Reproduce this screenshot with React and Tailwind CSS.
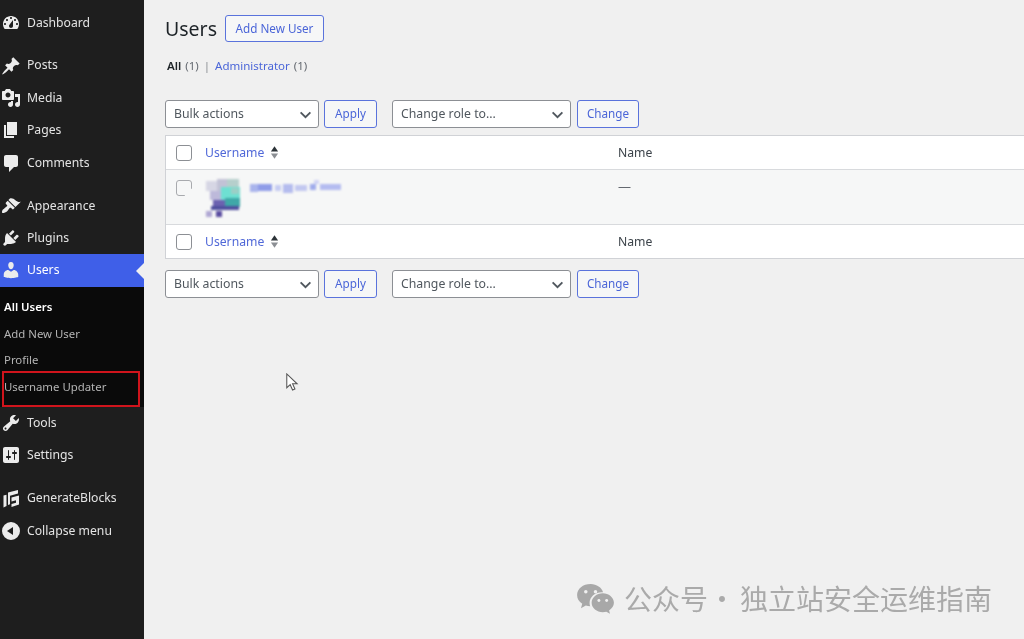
const icons = {
  dashboard: 'M3.76 16h12.48c1.1-1.37 1.76-3.11 1.76-5 0-4.42-3.58-8-8-8s-8 3.58-8 8c0 1.89.66 3.63 1.76 5zM10 4c.55 0 1 .45 1 1s-.45 1-1 1-1-.45-1-1 .45-1 1-1zM6 6c.55 0 1 .45 1 1s-.45 1-1 1-1-.45-1-1 .45-1 1-1zm8 0c.55 0 1 .45 1 1s-.45 1-1 1-1-.45-1-1 .45-1 1-1zm-5.37 5.55L12 7v6c0 1.1-.9 2-2 2s-2-.9-2-2c0-.57.24-1.08.63-1.45zM4 10c.55 0 1 .45 1 1s-.45 1-1 1-1-.45-1-1 .45-1 1-1zm12 0c.55 0 1 .45 1 1s-.45 1-1 1-1-.45-1-1 .45-1 1-1z',
  posts: 'M10.44 3.02l1.82-1.82 6.36 6.35-1.83 1.82c-1.05-.68-2.48-.57-3.41.36l-.75.75c-.92.93-1.04 2.35-.35 3.41l-1.83 1.82-2.41-2.41-2.8 2.79c-.42.42-3.38 2.71-3.8 2.29s1.86-3.39 2.28-3.81l2.79-2.79L4.1 9.36l1.83-1.82c1.05.69 2.48.57 3.4-.36l.75-.75c.93-.92 1.05-2.35.36-3.41z',
  media: 'M13 11V4c0-.55-.45-1-1-1h-1.67L9 1H5L3.67 3H2c-.55 0-1 .45-1 1v7c0 .55.45 1 1 1h10c.55 0 1-.45 1-1zM7 4.5c1.38 0 2.5 1.12 2.5 2.5S8.38 9.5 7 9.5 4.5 8.38 4.5 7 5.62 4.5 7 4.5zM14 6h5v10.5c0 1.38-1.12 2.5-2.5 2.5S14 17.88 14 16.5s1.12-2.5 2.5-2.5c.17 0 .34.02.5.05V9h-3V6zm-4 8.05V13h2v3.5c0 1.38-1.12 2.5-2.5 2.5S7 17.88 7 16.5 8.12 14 9.5 14c.17 0 .34.02.5.05z',
  pages: 'M6 15V2h10v13H6zm-1 1h8v2H3V5h2v11z',
  comments: 'M5 2h10c1.1 0 2 .9 2 2v8c0 1.1-.9 2-2 2h-2l-5 5v-5H5c-1.1 0-2-.9-2-2V4c0-1.1.9-2 2-2z',
  appearance: 'M14.48 11.06L7.41 3.99l1.5-1.5c.5-.56 2.3-.47 3.51.32 1.21.8 1.43 1.28 2.91 2.1 1.18.64 2.45 1.26 4.45.85zm-.71.71L6.7 4.7 4.93 6.47c-.39.39-.39 1.02 0 1.41l1.06 1.06c.39.39.39 1.03 0 1.42-.6.6-1.43 1.11-2.21 1.69-.35.26-.7.53-1.01.84C1.43 13.23.78 15.6 1 16.5c.09.28.26.46.53.53.91.21 3.27-.42 4.63-1.77.31-.31.58-.66.84-1.01.58-.78 1.09-1.61 1.69-2.21.39-.39 1.03-.39 1.42 0l1.06 1.06c.39.39 1.02.39 1.41 0z',
  plugins: 'M13.11 4.36L9.87 7.6 8 5.73l3.24-3.24c.35-.34 1.05-.2 1.56.32.52.51.66 1.21.31 1.55zm-8 1.77l.91-1.12 9.01 9.01-1.19.84c-.71.71-2.63 1.16-3.82 1.16H6.14L4.9 17.26c-.59.59-1.54.59-2.12 0-.59-.58-.59-1.53 0-2.12l1.24-1.24v-3.88c0-1.13.4-3.19 1.09-3.89zm7.26 3.97l3.24-3.24c.34-.35 1.04-.21 1.55.31.52.51.66 1.21.31 1.55l-3.24 3.25z',
  users: 'M10 9.25c-2.27 0-2.73-3.44-2.73-3.44C7 4.02 7.82 2 9.97 2c2.16 0 2.98 2.02 2.71 3.81 0 0-.41 3.44-2.68 3.44zm0 2.57L12.72 10c2.39 0 4.52 2.33 4.52 4.53v2.49s-3.65 1.13-7.24 1.13c-3.65 0-7.24-1.13-7.24-1.13v-2.49c0-2.25 1.94-4.48 4.47-4.48z',
  tools: 'M16.68 9.77c-1.34 1.34-3.3 1.67-4.95.99l-5.41 6.52c-.99.99-2.59.99-3.58 0s-.99-2.59 0-3.57l6.52-5.42c-.68-1.65-.35-3.61.99-4.95 1.28-1.28 3.12-1.62 4.72-1.06l-2.89 2.89 2.82 2.82 2.86-2.87c.53 1.58.18 3.39-1.08 4.65zM3.81 16.21c.4.39 1.04.39 1.43 0 .4-.4.4-1.04 0-1.43-.39-.4-1.03-.4-1.43 0-.39.39-.39 1.03 0 1.43z',
  settings: 'M18 16V4c0-1.1-.9-2-2-2H4c-1.1 0-2 .9-2 2v12c0 1.1.9 2 2 2h12c1.1 0 2-.9 2-2zM8 11h1c.55 0 1 .45 1 1s-.45 1-1 1H8v1.5c0 .28-.22.5-.5.5s-.5-.22-.5-.5V13H6c-.55 0-1-.45-1-1s.45-1 1-1h1V5.5c0-.28.22-.5.5-.5s.5.22.5.5V11zm5-2h-1c-.55 0-1-.45-1-1s.45-1 1-1h1V5.5c0-.28.22-.5.5-.5s.5.22.5.5V7h1c.55 0 1 .45 1 1s-.45 1-1 1h-1v5.5c0 .28-.22.5-.5.5s-.5-.22-.5-.5V9z',
  blocks: 'M7 3.500l10-2.500v3.500L9 6.700v8.500L7 16zM2.500 6.500l3-.8V17l-3 1.500zM10.500 8.500L18 6.500v9l-7.500 2.500v-3l4.500-1.300v-2.500l-4.500 1.300z',
  collapse: 'M10 1a9 9 0 1 0 0 18a9 9 0 0 0 0-18zM12 6v8l-6-4z',
}

function MenuIcon({name}){
  return (
    <svg viewBox="0 0 20 20" className="w-[20px] h-[20px] shrink-0 fill-[#ececec]" fillRule="evenodd">
      <path d={icons[name]} />
    </svg>
  )
}

function MenuItem({icon,label,active}){
  return (
    <div className={`relative flex items-center h-[32.4px] pl-[1px] gap-[6px] text-[12.2px] ${active ? 'bg-[#3f5fe8] text-white' : 'text-[#e4e4e4]'}`}>
      <MenuIcon name={icon} />
      <span>{label}</span>
      {active && <span className="absolute right-0 top-[9px] w-0 h-0 border-y-[8px] border-y-transparent border-r-[8px] border-r-[#f0f0f0]"></span>}
    </div>
  )
}

function SubItem({label,current}){
  return (
    <div className={`h-[26.5px] flex items-center pl-[4px] text-[11.4px] ${current ? 'font-semibold text-white' : 'text-[#b4b4b4]'}`}>
      {label}
    </div>
  )
}

function SelectBox({label,width}){
  return (
    <div className={`${width} h-[28px] flex items-center justify-between pl-[8px] pr-[6px] bg-white border border-[#8c8f94] rounded-[3px] text-[12.300px] text-[#50575e]`}>
      <span>{label}</span>
      <svg viewBox="0 0 12 12" className="w-[13px] h-[13px] fill-none stroke-[#50575e] stroke-[1.7]">
        <path d="M1.5 4l4.5 4.5L10.5 4" />
      </svg>
    </div>
  )
}

function OutlineButton({label,width}){
  return (
    <div className={`${width} h-[28px] flex items-center justify-center bg-[#f6f7f7] border border-[#5a73dc] rounded-[3px] text-[11.700px] text-[#4a65d8]`}>
      {label}
    </div>
  )
}

function TableNav({className}){
  return (
    <div className={`flex items-center ${className}`}>
      <SelectBox label="Bulk actions" width="w-[154px]" />
      <div className="w-[5px]"></div>
      <OutlineButton label="Apply" width="w-[53px]" />
      <div className="w-[15px]"></div>
      <SelectBox label="Change role to..." width="w-[179px]" />
      <div className="w-[6px]"></div>
      <OutlineButton label="Change" width="w-[62px]" />
    </div>
  )
}

function CheckBox(){
  return <span className="block w-[16px] h-[16px] bg-white border border-[#8c8f94] rounded-[3px] shrink-0"></span>
}

function HeadRow({borderClass}){
  return (
    <div className={`flex items-center h-[34px] bg-white text-[12.200px] ${borderClass}`}>
      <div className="w-[39px] pl-[10px]"><CheckBox /></div>
      <div className="w-[413px] flex items-center gap-[6px] text-[#5068d8]">
        <span className="pt-[2px]">Username</span>
        <svg viewBox="0 0 10 16" className="w-[9px] h-[15px]">
          <path d="M5 1l4 6H1z" fill="#2c3338" />
          <path d="M5 15l4-6H1z" fill="#8c8f94" />
        </svg>
      </div>
      <div className="pt-[2px] text-[#3c434a]">Name</div>
    </div>
  )
}

// pixelated placeholder of the blurred out avatar and login
function BlurredUser(){
  return (
    <svg viewBox="0 0 140 42" className="w-[140px] h-[42px] blur-[0.8px]">
      <g>
        <rect x="1" y="2" width="11" height="10" fill="#d6d6e4" />
        <rect x="12" y="0" width="10" height="12" fill="#c2c2d6" />
        <rect x="22" y="0" width="12" height="10" fill="#b6cfcc" />
        <rect x="5" y="12" width="11" height="9" fill="#bdb9da" />
        <rect x="16" y="8" width="19" height="13" fill="#6ee0d2" />
        <rect x="26" y="9" width="8" height="6" fill="#9ccfc6" />
        <rect x="8" y="21" width="12" height="8" fill="#6b62b0" />
        <rect x="20" y="19" width="15" height="9" fill="#3fa8a8" />
        <rect x="6" y="27" width="28" height="4" fill="#4f4f9e" />
        <rect x="1" y="32" width="6" height="6" fill="#b0a8d4" />
        <rect x="11" y="32" width="6" height="6" fill="#5a4ca0" />
        <rect x="45" y="5" width="8" height="8" fill="#a9b4ec" />
        <rect x="53" y="5" width="14" height="7" fill="#8f9ce8" />
        <rect x="70" y="6" width="6" height="6" fill="#c6ccf2" />
        <rect x="78" y="5" width="10" height="9" fill="#b4bcee" />
        <rect x="90" y="6" width="12" height="6" fill="#c2c8f0" />
        <rect x="105" y="5" width="6" height="6" fill="#a0acec" />
        <rect x="109" y="1" width="5" height="4" fill="#d0d4f4" />
        <rect x="115" y="5" width="21" height="6" fill="#b4bcf0" />
      </g>
    </svg>
  )
}

export default function App(){
  return (
    <div className="relative flex h-[639px] w-[1024px] overflow-hidden bg-[#f0f0f0] blur-[0.35px] font-['Noto_Sans','Liberation_Sans',sans-serif]">
      {/* Sidebar */}
      <aside className="w-[144px] shrink-0 bg-[#1e1e1e] pt-[6.5px]">
        <MenuItem icon="dashboard" label="Dashboard" />
        <div className="h-[10.5px]"></div>
        <MenuItem icon="posts" label="Posts" />
        <MenuItem icon="media" label="Media" />
        <MenuItem icon="pages" label="Pages" />
        <MenuItem icon="comments" label="Comments" />
        <div className="h-[10.5px]"></div>
        <MenuItem icon="appearance" label="Appearance" />
        <MenuItem icon="plugins" label="Plugins" />
        <MenuItem icon="users" label="Users" active />
        <div className="bg-[#0a0a0a] pt-[7px] pb-[7px]">
          <SubItem label="All Users" current />
          <SubItem label="Add New User" />
          <SubItem label="Profile" />
          <SubItem label="Username Updater" />
        </div>
        <MenuItem icon="tools" label="Tools" />
        <MenuItem icon="settings" label="Settings" />
        <div className="h-[11px]"></div>
        <MenuItem icon="blocks" label="GenerateBlocks" />
        <MenuItem icon="collapse" label="Collapse menu" />
      </aside>

      {/* Main content */}
      <main className="flex-1 min-w-0 pl-[21px] pt-[15px]">
        <div className="flex items-center gap-[8px] h-[27px]">
          <h1 className="text-[19.500px] text-[#1d2327]">Users</h1>
          <div className="w-[99px] h-[27px] flex items-center justify-center bg-[#f6f7f7] border border-[#5a73dc] rounded-[3px] text-[11.700px] text-[#4a65d8]">Add New User</div>
        </div>
        <div className="flex items-center h-[18px] mt-[15px] pl-[2px] text-[11.500px] text-[#646970]">
          <span className="font-semibold text-[#1d2327]">All</span>
          <span className="ml-[4px]">(1)</span>
          <span className="mx-[5px] text-[#8c8f94]">|</span>
          <span className="text-[#4a65d8]">Administrator</span>
          <span className="ml-[4px]">(1)</span>
        </div>
        <TableNav className="mt-[25px]" />
        <div className="mt-[7px] w-[880px] border border-[#d0d2d6]">
          <HeadRow borderClass="border-b border-[#d8dadd]" />
          <div className="flex h-[54px] bg-[#f6f7f7]">
            <div className="w-[39px] pl-[10px] pt-[10px]">
              <span className="block w-[16px] h-[16px] border border-[#a8aaae] rounded-[3px] [clip-path:polygon(0_0,100%_0,100%_55%,55%_55%,55%_100%,0_100%)]"></span>
            </div>
            <div className="w-[413px] pt-[9px]"><BlurredUser /></div>
            <div className="pt-[7px] text-[13px] text-[#646970]">—</div>
          </div>
          <HeadRow borderClass="border-t border-[#d8dadd]" />
        </div>
        <TableNav className="mt-[11px]" />
      </main>

      {/* Annotation box over the sidebar */}
      <div className="absolute left-[2px] top-[371px] w-[138px] h-[36px] border-2 border-[#d0141c]"></div>

      {/* Mouse pointer in the screenshot */}
      <svg viewBox="0 0 14 20" className="absolute left-[285px] top-[373px] w-[14px] h-[19px]">
        <path d="M1.5 1v14.5l3.6-3.2 2.5 5.6 2.5-1.1-2.5-5.4h4.8z" fill="#fff" stroke="#555" strokeWidth="1.1" />
      </svg>

      {/* Watermark */}
      <div className="absolute left-[576px] top-[580px] flex items-center text-[#aaaaaa] text-[28px] leading-[36px] font-['Noto_Sans_CJK_SC',sans-serif]">
        <svg viewBox="0 0 40 32" className="w-[39px] h-[31px] mr-[9px] fill-[#a8a8a8]">
          <path d="M15 1C7 1 1 6 1 12.500c0 3.800 2 6.900 5.300 9L5 26l5-2.700c1.500.4 3 .7 4.500.8-.4-1.100-.6-2.300-.6-3.500 0-6.200 5.600-11.100 12.700-11.100.4 0 .8 0 1.200.1C26.500 4.700 21.200 1 15 1z" />
          <path d="M39 20.500c0-5.400-5.400-9.800-11.500-9.800S16 15.100 16 20.500s5.400 9.800 11.500 9.800c1.300 0 2.500-.2 3.700-.5l3.800 2-1-3.400c3-1.900 5-4.700 5-7.900z" />
          <g fill="#f0f0f0">
            <circle cx="10" cy="9" r="1.800" />
            <circle cx="20" cy="9" r="1.800" />
            <circle cx="23.500" cy="18" r="1.500" />
            <circle cx="31.500" cy="18" r="1.500" />
          </g>
        </svg>
        <span>公众号</span>
        <span className="w-[28px] mr-[4px] text-center">·</span>
        <span>独立站安全运维指南</span>
      </div>
    </div>
  )
}
